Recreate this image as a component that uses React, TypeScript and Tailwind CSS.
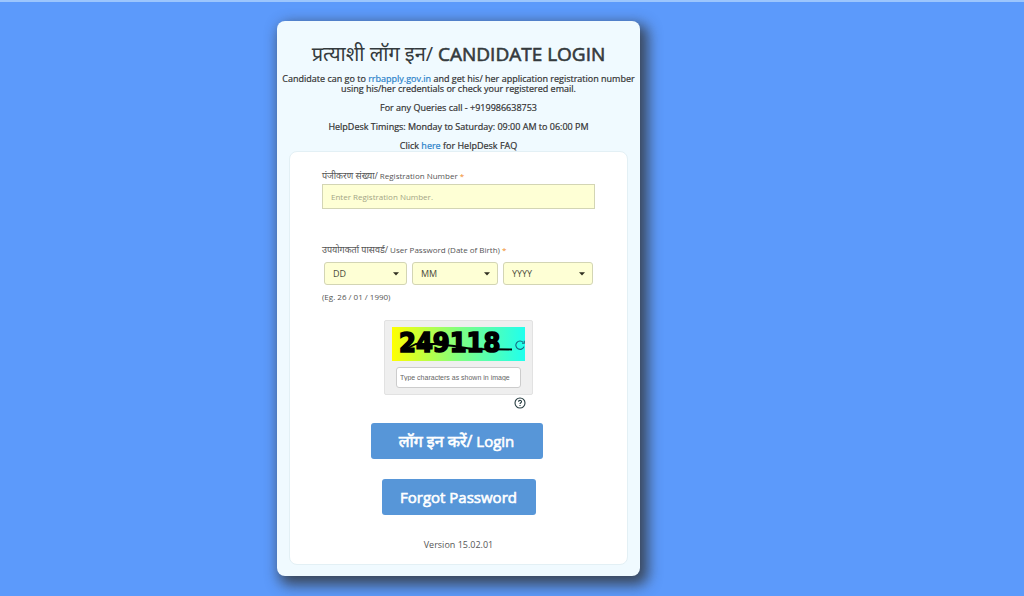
import { useState } from 'react'
import type { ReactNode } from 'react'

const range = (from: number, to: number) =>
  Array.from({ length: to - from + 1 }, (_, i) => String(from + i).padStart(2, '0'))

const dateParts = [
  { label: 'DD', name: 'Day of birth', width: 'w-[83px]', options: range(1, 31) },
  { label: 'MM', name: 'Month of birth', width: 'w-[86px]', options: range(1, 12) },
  { label: 'YYYY', name: 'Year of birth', width: 'w-[90px]', options: range(1960, 2010) },
]

function DateSelect({ label, name, width, options }: (typeof dateParts)[number]) {
  return (
    <div className={`relative ${width}`}>
      <select
        aria-label={name}
        defaultValue=""
        className="h-[23px] w-full appearance-none rounded-[3px] border border-[#d3d5b4] bg-[#feffd5] px-2 text-[9px] text-[#4c4c3c]"
      >
        <option value="">{label}</option>
        {options.map(o => (
          <option key={o} value={o}>{o}</option>
        ))}
      </select>
      <svg viewBox="0 0 6 4" className="pointer-events-none absolute top-[10px] right-2 h-1 w-1.5">
        <path d="M0 0.3h6L3 3.5z" fill="#2f2f20" />
      </svg>
    </div>
  )
}

function Captcha() {
  return (
    <div className="relative">
      <svg viewBox="0 0 133 34" className="block h-[34px] w-full" role="img" aria-label="Captcha">
        <defs>
          <linearGradient id="captcha" x1="0" x2="1" y1="0" y2="0">
            <stop offset="0" stopColor="#ffff00" />
            <stop offset="0.5" stopColor="#80ff80" />
            <stop offset="1" stopColor="#20ffee" />
          </linearGradient>
        </defs>
        <rect width="133" height="34" fill="url(#captcha)" />
        <text
          x="7"
          y="25"
          fontFamily="'DejaVu Sans Condensed', 'DejaVu Sans', sans-serif"
          fontWeight="700"
          fontSize="27"
          stroke="#000"
          strokeWidth="1.6"
        >
          249118
        </text>
        <path d="M12 23L24 17L43 17L62 19L80 22L120 22.5" fill="none" stroke="#000" strokeWidth="1.8" />
      </svg>
      <button type="button" aria-label="Refresh captcha" className="absolute top-3 right-0 h-3 w-2.5">
        <svg viewBox="0 0 10 12" fill="none" stroke="#176b80" strokeWidth="1.1" className="h-3 w-2.5">
          <path d="M8.2 3.4A4.2 4.2 0 1 0 9 7.6" />
          <path d="M9.3 1.8V4.3H7" />
        </svg>
      </button>
    </div>
  )
}

function Required() {
  return <span className="text-[#f08a24]">*</span>
}

function InfoLink({ children }: { children: ReactNode }) {
  return <a href="#" className="text-[#2b82c9]">{children}</a>
}

export default function App() {
  const [registration, setRegistration] = useState('')
  const [captcha, setCaptcha] = useState('')

  return (
    <main className="min-h-screen border-t-2 border-[#9cc6fd] bg-[#5c9afb] pt-[19px] pr-[107px] pb-5 font-['Open_Sans','Noto_Sans_Devanagari','Noto_Sans',sans-serif] text-[#333]">
      <div className="mx-auto max-w-[363px] rounded-lg bg-[#f0faff] px-3 pt-[21px] pb-[11px] shadow-[5px_6px_14px_3px_rgba(50,50,50,0.8)]">

        {/* Heading and helpdesk details */}
        <header className="text-center">
          <h1 className="text-[19px] leading-6 whitespace-nowrap text-[#343a3d]">
            <span className="text-xl leading-6">प्रत्याशी लॉग इन/</span>{' '}
            <span className="[-webkit-text-stroke:0.6px]">CANDIDATE LOGIN</span>
          </h1>
          <div className="-mx-2 mt-2 space-y-[9px] text-[9px] leading-[10px] [-webkit-text-stroke:0.2px]">
            <p>
              Candidate can go to <InfoLink>rrbapply.gov.in</InfoLink> and get his/ her application registration number
              using his/her credentials or check your registered email.
            </p>
            <p>For any Queries call - +919986638753</p>
            <p>HelpDesk Timings: Monday to Saturday: 09:00 AM to 06:00 PM</p>
            <p>Click <InfoLink>here</InfoLink> for HelpDesk FAQ</p>
          </div>
        </header>

        {/* Login form */}
        <form
          onSubmit={e => e.preventDefault()}
          className="rounded-lg border border-[#e3f0f5] bg-white px-8 pt-[17px] pb-3 text-[9px] text-[#555]"
        >
          <label htmlFor="registration" className="block text-[8px] leading-[14px]">
            <span className="text-[9px]">पंजीकरण संख्या/</span> Registration Number <Required />
          </label>
          <input
            id="registration"
            value={registration}
            onChange={e => setRegistration(e.target.value)}
            placeholder="Enter Registration Number."
            className="mt-px h-[25px] w-full border border-[#d3d5b4] bg-[#feffd5] px-2 text-[8px] placeholder:text-[#a3a585]"
          />

          <fieldset className="mt-[34px]">
            <legend className="text-[8px] leading-[14px]">
              <span className="text-[9px]">उपयोगकर्ता पासवर्ड/</span> User Password (Date of Birth) <Required />
            </legend>
            <div className="mt-[5px] flex justify-between px-0.5">
              {dateParts.map(part => (
                <DateSelect key={part.label} {...part} />
              ))}
            </div>
            <p className="mt-[5px] text-[8px] leading-[14px]">(Eg. 26 / 01 / 1990)</p>
          </fieldset>

          <div className="mx-auto mt-4 w-[149px]">
            <div className="rounded-xs border border-[#e2e2e2] bg-[#efefef] px-[7px] pt-[6px] pb-[6px]">
              <Captcha />
              <input
                aria-label="Type characters as shown in image"
                value={captcha}
                onChange={e => setCaptcha(e.target.value)}
                placeholder="Type characters as shown in image"
                className="mx-auto mt-[6px] block h-[21px] w-[125px] rounded-[3px] border border-[#ccc] bg-white px-[3px] font-['Liberation_Sans',sans-serif] text-[7px] placeholder:text-[#666]"
              />
            </div>
            <button type="button" aria-label="Help" className="mt-0.5 mr-[7px] ml-auto block size-3">
              <svg viewBox="0 0 12 12" fill="none" stroke="#263c40" className="size-3">
                <circle cx="6" cy="6" r="5" strokeWidth="1.1" />
                <path d="M4.5 4.8C4.5 2.9 7.5 2.9 7.5 4.7C7.5 5.8 6 5.8 6 7.1M6 8.1V9" strokeWidth="1.1" />
              </svg>
            </button>
          </div>

          <div className="mt-[14px] flex flex-col items-center gap-5 text-[15px] leading-5 text-white [-webkit-text-stroke:0.6px]">
            <button type="submit" className="mr-1 h-9 w-[172px] rounded-[3px] bg-[#5796d8]">
              <span className="text-base leading-5">लॉग इन करें/</span> Login
            </button>
            <button type="button" className="h-9 w-[154px] rounded-[3px] bg-[#5796d8]">
              Forgot Password
            </button>
          </div>

          <p className="mt-[23px] text-center leading-[14px]">Version 15.02.01</p>
        </form>
      </div>
    </main>
  )
}
